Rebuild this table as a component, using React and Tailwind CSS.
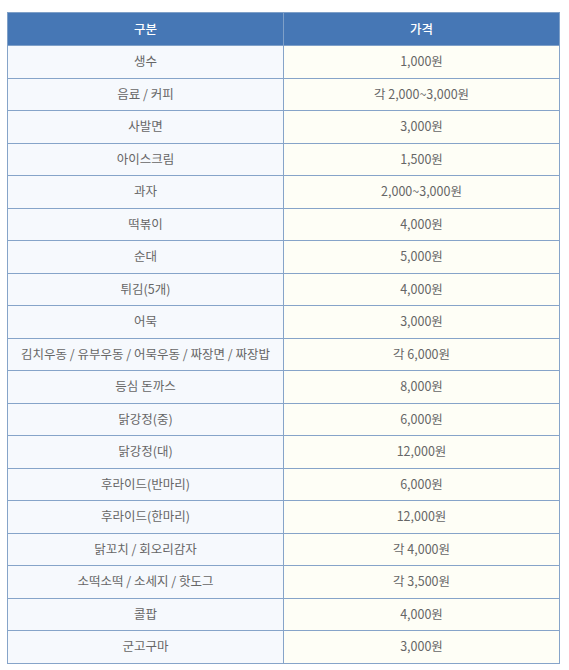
const rows = [
  ["생수", "1,000원"],
  ["음료 / 커피", "각 2,000~3,000원"],
  ["사발면", "3,000원"],
  ["아이스크림", "1,500원"],
  ["과자", "2,000~3,000원"],
  ["떡볶이", "4,000원"],
  ["순대", "5,000원"],
  ["튀김(5개)", "4,000원"],
  ["어묵", "3,000원"],
  ["김치우동 / 유부우동 / 어묵우동 / 짜장면 / 짜장밥", "각 6,000원"],
  ["등심 돈까스", "8,000원"],
  ["닭강정(중)", "6,000원"],
  ["닭강정(대)", "12,000원"],
  ["후라이드(반마리)", "6,000원"],
  ["후라이드(한마리)", "12,000원"],
  ["닭꼬치 / 회오리감자", "각 4,000원"],
  ["소떡소떡 / 소세지 / 핫도그", "각 3,500원"],
  ["콜팝", "4,000원"],
  ["군고구마", "3,000원"],
];

export default function App() {
  return (
    <div className="bg-white w-[569px] h-[670px] pt-[12px] pl-[7px] font-['Noto_Sans_CJK_KR',sans-serif]">
      <table className="w-[553px] border-collapse table-fixed text-[12.5px] text-[#666]">
        <thead>
          <tr className="h-[33px]">
            <th className="border border-[#7fa0c8] bg-[#4677b5] text-white font-medium w-1/2">구분</th>
            <th className="border border-[#7fa0c8] bg-[#4677b5] text-white font-medium w-1/2">가격</th>
          </tr>
        </thead>
        <tbody>
          {rows.map(([name, price]) => (
            <tr key={name} className="h-[32.5px]">
              <td className="border border-[#86a4c9] bg-[#f6f9fd] text-center p-0">{name}</td>
              <td className="border border-[#86a4c9] bg-[#fefef6] text-center p-0">{price}</td>
            </tr>
          ))}
        </tbody>
      </table>
    </div>
  );
}
